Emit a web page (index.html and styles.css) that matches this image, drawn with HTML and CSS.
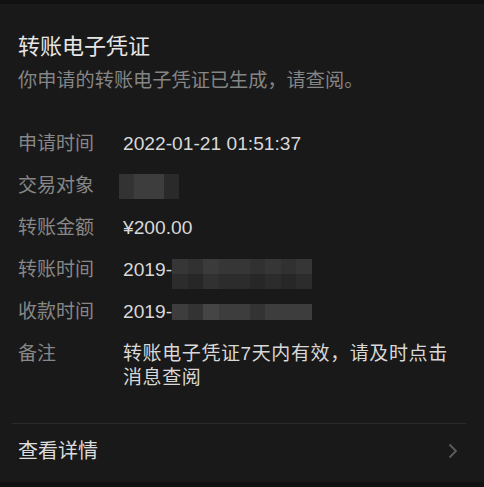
FILE: index.html
```html
<!DOCTYPE html>
<html lang="zh-CN">
  <head>
    <meta charset="UTF-8" />
    <meta name="viewport" content="width=device-width, initial-scale=1.0" />
    <title>转账电子凭证</title>
    <link rel="stylesheet" href="styles.css">
  </head>
  <body>
    <div class="kant"></div>
    <main class="kort">
      <header>
        <h1>转账电子凭证</h1>
        <p class="under">你申请的转账电子凭证已生成，请查阅。</p>
      </header>

      <section class="liste">
        <div class="raekke">
          <span class="navn">申请时间</span>
          <span class="vaerdi tal">2022-01-21 01:51:37</span>
        </div>
        <div class="raekke">
          <span class="navn">交易对象</span>
          <span class="vaerdi tal">
            <span class="mosaik lille">
              <i class="m2"></i><i class="m3"></i><i class="m3"></i><i class="m1"></i>
            </span>
          </span>
        </div>
        <div class="raekke">
          <span class="navn">转账金额</span>
          <span class="vaerdi tal">¥200.00</span>
        </div>
        <div class="raekke">
          <span class="navn">转账时间</span>
          <span class="vaerdi tal">2019-<span class="mosaik hoej">
              <i class="m2"></i><i class="m1"></i><i class="m3"></i><i class="m2"></i><i class="m2"></i><i class="m1"></i><i class="m2"></i><i class="m1"></i><i class="m2"></i>
            </span></span>
        </div>
        <div class="raekke">
          <span class="navn">收款时间</span>
          <span class="vaerdi tal">2019-<span class="mosaik">
              <i class="m3"></i><i class="m2"></i><i class="m4"></i><i class="m3"></i><i class="m3"></i><i class="m2"></i><i class="m3"></i><i class="m3"></i><i class="m3"></i>
            </span></span>
        </div>
        <div class="raekke fri">
          <span class="navn">备注</span>
          <span class="vaerdi note">转账电子凭证7天内有效，请及时点击消息查阅</span>
        </div>
      </section>

      <hr />

      <div class="detaljer">
        <span>查看详情</span>
        <svg width="10" height="16" viewBox="0 0 10 16">
          <path d="M1.5 1.5 L8 8 L1.5 14.5" fill="none" stroke="#5c5c5c" stroke-width="1.8" />
        </svg>
      </div>
    </main>
    <div class="kant bund"></div>
  </body>
</html>
```

FILE: styles.css
```css
body {
  margin: 0;
  background-color: #191919;
  font-family: "Liberation Sans", "Noto Sans CJK SC", sans-serif;
  height: 487px;
  display: flex;
  flex-direction: column;
}

.kant {
  height: 4px;
  background-color: #111111;
}

.bund {
  height: 5px;
  margin-top: auto;
}

.kort {
  padding: 28px 0 0 0;
}

header {
  padding: 0 18px;
}

h1 {
  margin: 0;
  font-size: 22px;
  line-height: 30px;
  font-weight: normal;
  color: #e6e6e6;
}

.under {
  margin: 6px 0 0 0;
  font-size: 19.2px;
  line-height: 26px;
  color: #858585;
}

.liste {
  margin-top: 38px;
  padding: 0 18px;
  display: flex;
  flex-direction: column;
  gap: 18px;
}

.raekke {
  display: flex;
  align-items: center;
  height: 24px;
  font-size: 19px;
  line-height: 24px;
}

.raekke.fri {
  height: auto;
  align-items: flex-start;
}

.navn {
  width: 105px;
  flex-shrink: 0;
  color: #878787;
}

.vaerdi {
  color: #d8d8d8;
  width: 330px;
}

.note {
  letter-spacing: 0.6px;
}

.tal {
  font-size: 19.2px;
  display: flex;
  align-items: center;
  height: 24px;
}

.mosaik {
  display: inline-flex;
  flex-shrink: 0;
  height: 16px;
  filter: blur(0.6px);
}

.mosaik i {
  width: 15.5px;
  height: 100%;
}

.mosaik.hoej {
  height: 30px;
  margin-top: 8px;
  background: linear-gradient(#3a3a3a 50%, #242424 50%);
}

.mosaik.hoej i {
  opacity: 0.55;
}

.mosaik.lille {
  height: 25px;
  margin-left: -4px;
}

.mosaik.lille i {
  width: 15px;
}

.m1 { background-color: #2a2a2a; }
.m2 { background-color: #333333; }
.m3 { background-color: #3d3d3d; }
.m4 { background-color: #454545; }

hr {
  margin: 33px 18px 0 12px;
  border: none;
  border-top: 1px solid #2a2a2a;
}

.detaljer {
  display: flex;
  justify-content: space-between;
  align-items: center;
  margin-top: 14px;
  padding: 0 26px 0 18px;
  font-size: 20px;
  line-height: 26px;
  color: #dcdcdc;
}
```
